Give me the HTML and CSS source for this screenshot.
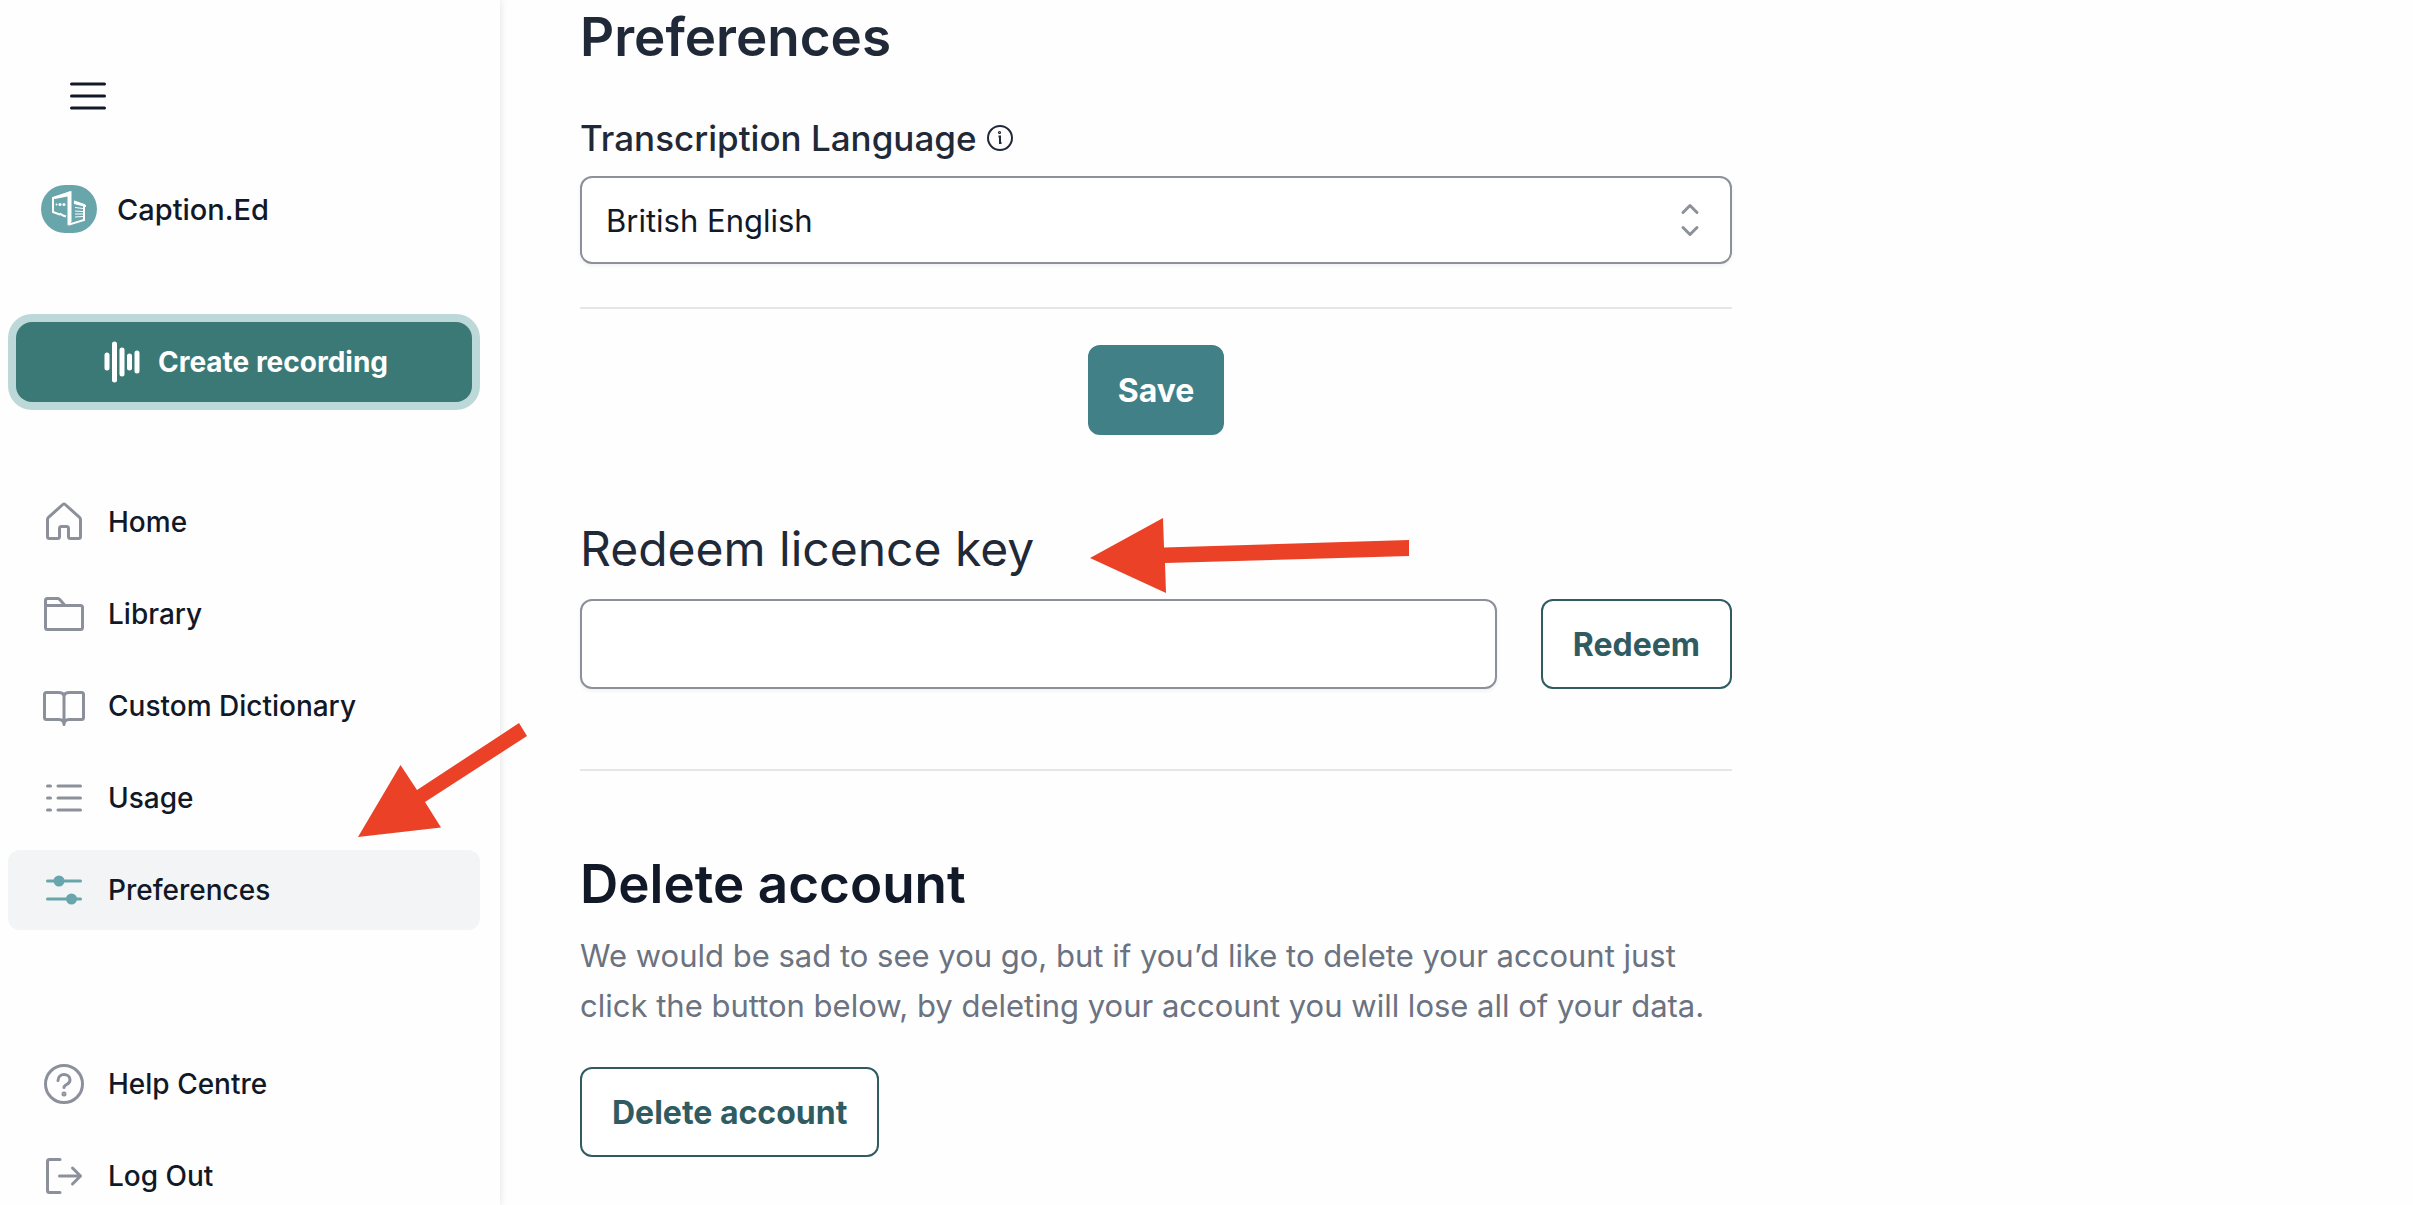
FILE: index.html
```
<!DOCTYPE html>
<html lang="en">

<head>
	<meta charset="utf-8">
	<title>Preferences - Caption.Ed</title>
	<link rel="stylesheet" href="styles.css">
</head>
<body>
	<div class="sidebar">
		<button class="menu-button" type="button" aria-label="Menu">
			<svg class="icon" viewBox="0 0 48 48"><path d="M7.5 12h33M7.5 24h33M7.5 36h33"/></svg>
		</button>

		<a href="/" class="brand">
			<svg class="logo" viewBox="0 0 56 48">
				<rect width="56" height="48" rx="24" fill="#69a6ac"/>
				<path d="M25 31.5l-3-1-2.5-1.5-1 .5-6.5-2.5V13l16.500-5.500v32l14.5-4.500V20l-10-3.500" fill="none" stroke="#fff" stroke-width="2"/>
				<path d="M26.5 7.5l4-1.5v31l-4 3.500z" fill="#fff"/>
				<path d="M12 12l17-5v4l-15 3z" fill="#fff"/>
				<path d="M33 16l12 4v2l-12-3z" fill="#fff"/>
				<path d="M34 22.5l8 1M34 26l8 .5M34 29h8M34 32l8-.5" stroke="#fff" stroke-width="1"/>
				<circle cx="15.5" cy="19.5" r="1" fill="#fff"/>
				<circle cx="19" cy="19.5" r="1.5" fill="#fff"/>
				<circle cx="23" cy="19.5" r="1.5" fill="#fff"/>
			</svg>
			Caption.Ed
		</a>

		<button class="create-button" type="button">
			<svg class="wave" viewBox="0 0 36 42"><path d="M3 14v13M10.5 3v36M18 9v24M25.5 15v12M33 12v18"/></svg>
			Create recording
		</button>

		<nav class="nav">
			<a href="/" class="link">
				<svg class="icon" viewBox="0 0 48 48"><path d="M22.8 6.5L8.5 19.3a3 3 0 0 0-1 2.2v17a2 2 0 0 0 2 2h8a2 2 0 0 0 2-2v-8a2 2 0 0 1 2-2h5a2 2 0 0 1 2 2v8a2 2 0 0 0 2 2h8a2 2 0 0 0 2-2v-17a3 3 0 0 0-1-2.2L25.2 6.5a1.8 1.8 0 0 0-2.4 0z"/></svg>
				Home
			</a>
			<a href="/library" class="link">
				<svg class="icon" viewBox="0 0 48 48"><path d="M5.5 15.500h35a2 2 0 0 1 2 2v20a2 2 0 0 1-2 2h-33a2 2 0 0 1-2-2V10.500a2 2 0 0 1 2-2h10a3 3 0 0 1 2 .8l5.500 6.200"/></svg>
				Library
			</a>
			<a href="/dictionary" class="link">
				<svg class="icon" viewBox="0 0 48 48"><path d="M24 15c0-3 2-4.500 5-4.500h12.500a2 2 0 0 1 2 2v23a2 2 0 0 1-2 2H29c-3 0-5 1.500-5 5 0-3.500-2-5-5-5H6.500a2 2 0 0 1-2-2v-23a2 2 0 0 1 2-2H19c3 0 5 1.500 5 4.500zv27"/></svg>
				Custom Dictionary
			</a>
			<a href="/usage" class="link">
				<svg class="icon" viewBox="0 0 48 48"><path d="M7.500 12h3M7.500 24h3M7.500 36h3M18 12h22.500M18 24h22.500M18 36h22.500"/></svg>
				Usage
			</a>
			<a href="/preferences" class="link active">
				<svg class="icon" viewBox="0 0 48 48"><path d="M7.500 15h33M7.500 33h33"/><circle cx="19" cy="15" r="4" fill="currentColor"/><circle cx="31.500" cy="33" r="4" fill="currentColor"/></svg>
				Preferences
			</a>
		</nav>

		<nav class="nav nav-bottom">
			<a href="/help" class="link">
				<svg class="icon" viewBox="0 0 48 48"><circle cx="24" cy="24" r="18.500"/><path d="M18 20.500c0-4 3-6 6-6s6 2 6 5.500c0 5-6 4-6 7.500"/><circle cx="24" cy="34" r="1"/></svg>
				Help Centre
			</a>
			<a href="/logout" class="link">
				<svg class="icon" viewBox="0 0 48 48"><path d="M20 7.500H9.500a2 2 0 0 0-2 2v29a2 2 0 0 0 2 2H20M19.500 24h21M32.500 16l8 8-8 8"/></svg>
				Log Out
			</a>
		</nav>
	</div>

	<div class="main">
		<h1>Preferences</h1>
		<div class="label-row">
			<label for="language">Transcription Language</label>
			<svg class="info" viewBox="0 0 26 26"><circle cx="13" cy="13" r="12"/><path d="M11.500 11.500h1.500v6.500h1.500"/><circle cx="12.500" cy="7.500" r=".6"/></svg>
		</div>
		<div class="select-box">
			<select id="language" name="language">
				<option>British English</option>
			</select>
			<svg class="chevrons" viewBox="0 0 24 36"><path d="M5 10.500l7-7 7 7M5 25.500l7 7 7-7"/></svg>
		</div>
		<hr>
		<button class="button save" type="button">Save</button>

		<h2><label for="licence">Redeem licence key</label></h2>
		<div class="redeem-row">
			<input id="licence" type="text" name="licence">
			<button class="button outline" type="button">Redeem</button>
		</div>
		<hr>

		<h1 class="delete-title">Delete account</h1>
		<p>We would be sad to see you go, but if you’d like to delete your account just click the button below, by deleting your account you will lose all of your data.</p>
		<button class="button outline" type="button">Delete account</button>
	</div>

	<!-- arrows drawn over the page -->
	<svg class="arrow arrow-key" viewBox="0 0 320 76"><path d="M0 40L73 0l1 29.500L319 22v16L75 45l1 30z"/></svg>
	<svg class="arrow arrow-nav" viewBox="0 0 170 114"><path d="M0 114L42.500 42 59 67 161 0l8 13L67 79l16 25.500z"/></svg>
</body>

</html>
```
FILE: styles.css
```
* {
	box-sizing: border-box;
}

body {
	margin: 0;
	min-height: 100vh;
	display: flex;
	position: relative;
	overflow: hidden;
	background-color: #fefefe;
	color: #111827;
	font-family: "Inter", "Liberation Sans", sans-serif;
	font-size: 31px;
}

button, input, select {
	font-family: inherit;
	font-size: inherit;
	color: inherit;
}

/* sidebar */
.sidebar {
	flex: none;
	width: 500px;
	height: 100vh;
	padding: 72px 20px 0 8px;
	overflow: hidden;
	font-size: 28px;
	font-weight: 500;
	box-shadow: 0 0 8px rgba(0, 0, 0, 0.12);
}

.icon {
	flex: none;
	width: 48px;
	height: 48px;
	fill: none;
	stroke: currentColor;
	stroke-width: 3;
	stroke-linecap: round;
	stroke-linejoin: round;
}

.menu-button {
	display: block;
	margin-left: 56px;
	padding: 0;
	height: 48px;
	border: none;
	background: none;
}

.brand {
	display: flex;
	align-items: center;
	gap: 20px;
	margin: 65px 0 0 33px;
	color: #111827;
	font-size: 29px;
	text-decoration: none;
}

.logo {
	width: 56px;
	height: 48px;
}

.create-button {
	display: flex;
	align-items: center;
	justify-content: center;
	gap: 18px;
	width: calc(100% - 16px);
	height: 80px;
	margin: 89px 8px 80px;
	padding: 0 0 0 4px;
	border: none;
	border-radius: 16px;
	background-color: #3b7977;
	color: white;
	font-weight: 700;
	box-shadow: 0 0 0 8px #bdd8d9;
}

.wave {
	width: 36px;
	height: 42px;
	fill: none;
	stroke: white;
	stroke-width: 5;
	stroke-linecap: round;
}

.nav {
	display: flex;
	flex-direction: column;
	gap: 12px;
}

.nav-bottom {
	margin-top: 114px;
}

.link {
	display: flex;
	align-items: center;
	gap: 20px;
	height: 80px;
	padding-left: 32px;
	border-radius: 12px;
	color: #111827;
	text-decoration: none;
}

.link .icon {
	color: #8b909b;
}

.active {
	background-color: #f2f4f6;
}

.active .icon {
	color: #69a6ac;
}

/* preferences form */
.main {
	flex: 1;
	max-width: 1312px;
	padding: 0 80px;
}

h1 {
	margin: 0;
	color: #1f2937;
	font-size: 53px;
	line-height: 74px;
	font-weight: 600;
}

.label-row {
	display: flex;
	align-items: center;
	gap: 10px;
	margin-top: 40px;
	color: #1f2937;
	font-size: 35px;
	line-height: 48px;
	font-weight: 500;
}

.info {
	width: 26px;
	height: 26px;
	fill: none;
	stroke: currentColor;
	stroke-width: 2;
}

.select-box {
	position: relative;
	margin-top: 14px;
}

select, input {
	display: block;
	width: 100%;
	height: 88px;
	padding: 0 24px;
	border: 2px solid #8b909b;
	border-radius: 12px;
	background-color: white;
	box-shadow: 0 2px 4px rgba(0, 0, 0, 0.06);
	appearance: none;
}

.chevrons {
	position: absolute;
	top: 26px;
	right: 30px;
	width: 24px;
	height: 36px;
	fill: none;
	stroke: #8b909b;
	stroke-width: 3;
	stroke-linecap: round;
	stroke-linejoin: round;
	pointer-events: none;
}

hr {
	height: 2px;
	margin: 43px 0 36px;
	border: none;
	background-color: #e5e5ea;
}

.button {
	height: 90px;
	padding: 0 28px;
	border: 2px solid #305c61;
	border-radius: 12px;
	background-color: white;
	color: #305c61;
	font-size: 32px;
	font-weight: 700;
}

.outline {
	padding: 0 30px;
}

.save {
	display: block;
	margin: 0 auto;
	border-color: #418086;
	background-color: #418086;
	color: white;
}

h2 {
	margin: 80px 0 16px;
	color: #1f2937;
	font-size: 48px;
	line-height: 68px;
	font-weight: 400;
}

.redeem-row {
	display: flex;
	gap: 44px;
	margin-bottom: 80px;
}

.redeem-row input {
	flex: 1;
	height: 90px;
}

.delete-title {
	margin-top: 76px;
	color: #111827;
}

p {
	margin: 10px 0 36px;
	color: #6b7280;
	line-height: 50px;
}

/* arrows */
.arrow {
	position: absolute;
	fill: #ea4127;
}

.arrow-key {
	top: 518px;
	left: 1090px;
	width: 320px;
}

.arrow-nav {
	top: 723px;
	left: 358px;
	width: 170px;
}
```
